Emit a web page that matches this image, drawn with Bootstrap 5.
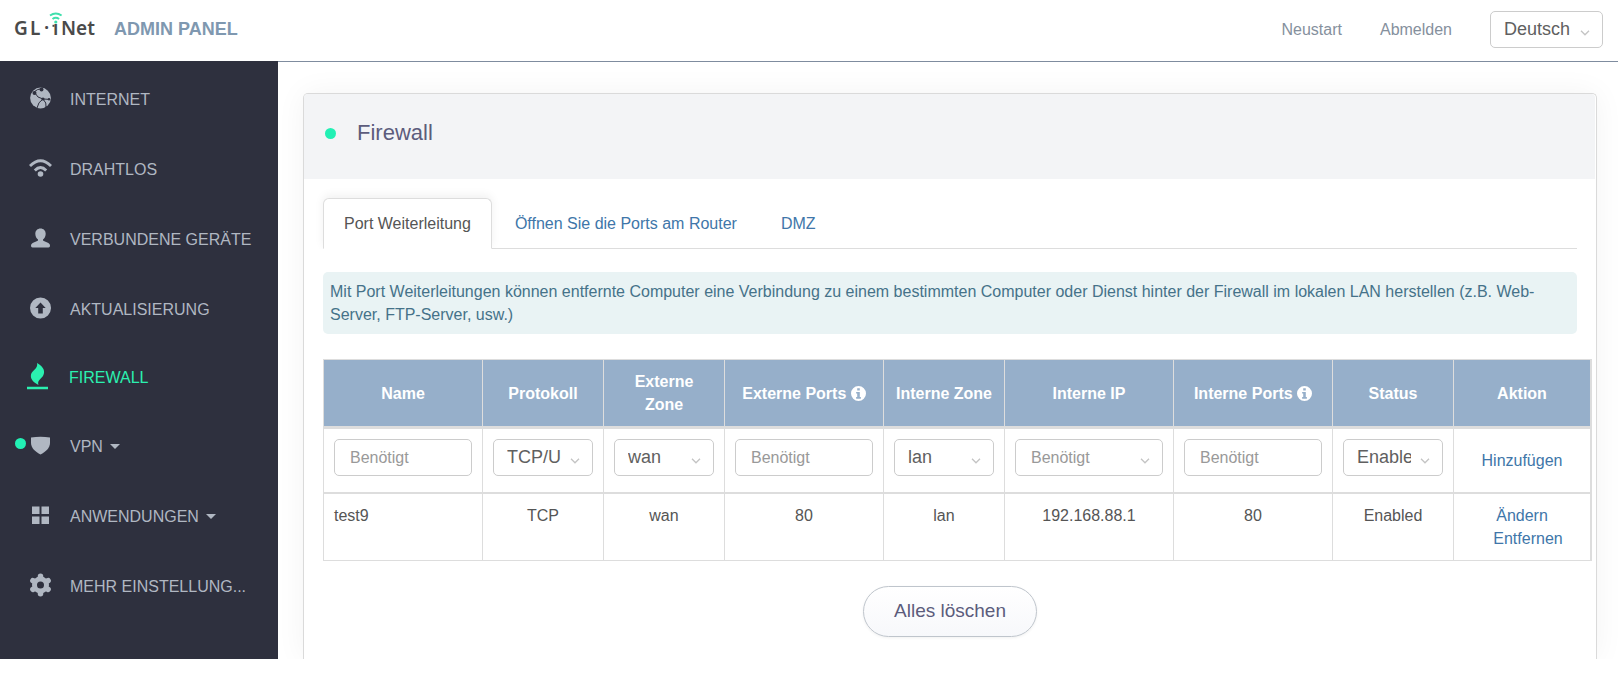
<!DOCTYPE html>
<html lang="de">
<head>
<meta charset="utf-8">
<meta name="viewport" content="width=device-width, initial-scale=1">
<title>GL·iNet Admin Panel – Firewall</title>
<link rel="stylesheet" href="https://cdn.jsdelivr.net/npm/bootstrap@5.3.0/dist/css/bootstrap.min.css">
<style>
  body { font: 16px/23px "Liberation Sans", Arial, sans-serif; color: #555; background: #fff; }
  a { text-decoration: none; color: #4076a9; }
  .topbar { min-height: 62px; border-bottom: 1px solid #7f8c9f; padding: 0 15px 2px 13px; gap: 17px; }
  .topbar a { color: #85909d; }
  .topbar nav { gap: 38px; }
  .panel-title { font-size: 18px; font-weight: 700; color: #7f98b0; }
  .shell { overflow: hidden; margin-top: -1px; }
  .sidebar { width: 278px; flex: none; background: #2e303e; padding: 3px 0 38px; }
  .sidebar a { height: 70px; color: #b0b7c2; padding-left: 30px; gap: 19px; position: relative; }
  .sidebar a.current { height: 67px; color: #2bf0b0; padding-left: 27px; gap: 21px; }
  .sidebar svg { width: 21px; height: 24px; flex: none; fill: currentColor; margin-bottom: 3px; }
  .sidebar .current svg { height: 27px; }
  .caret { border: 5px solid transparent; border-top-color: currentColor; border-bottom: 0; margin-left: 3px; display: inline-block; vertical-align: 3px; }
  .dot { width: 11px; height: 11px; border-radius: 50%; background: #22f0b4; flex: none; }
  .vpn-dot { position: absolute; left: 15px; top: 27px; }
  .content { padding: 32px 21px 0 25px; min-width: 0; }
  .panel { border: 1px solid #dadada; border-bottom: 0; border-radius: 5px 5px 0 0; box-shadow: 0 0 30px rgba(0,0,0,.05); background: #fff; }
  .panel-head { background: #f3f4f6; padding: 24px 21px 31px; gap: 21px; border-radius: 4px 4px 0 0; margin-right: 1px; }
  .panel-head h1 { font-size: 22px; line-height: 30px; color: #5c5c7c; font-weight: 400; }
  .panel-body { padding: 19px 19px 22px; }
  .nav-tabs { --bs-nav-tabs-border-color: #ddd; margin-bottom: 23px; gap: 2px; }
  .nav-tabs .nav-link { padding: 13px 20px; color: #4076a9; }
  .nav-tabs .nav-link.active { color: #555; border-color: #ddd #ddd #fff; box-shadow: 0 -3px 10px rgba(0,0,0,.06); clip-path: inset(-12px -12px 0 -12px); }
  .hint { background: #e9f3f4; color: #457289; padding: 8px 7px; border-radius: 5px; margin-bottom: 25px; }
  .rules-wrap { margin-right: -15px; margin-bottom: 25px; }
  .rules { width: 100%; table-layout: fixed; border-collapse: separate; border-spacing: 0; text-align: center; border: 1px solid #ddd; border-width: 1px 2px 0 0; }
  .rules th, .rules td { border: 0 solid #ddd; border-width: 0 0 1px 1px; padding: 10px; vertical-align: top; }
  .rules th { background: #96afca; color: #fff; vertical-align: middle; border-bottom-width: 3px; }
  .rules .entry td { padding-bottom: 16px; border-bottom-width: 2px; }
  .rules .entry td:last-child { padding-bottom: 10px; vertical-align: middle; }
  .w-s { width: 121px; } .w-m { width: 159px; } .w-l { width: 169px; }
  .rules th svg { width: 15px; height: 15px; fill: currentColor; vertical-align: -2px; }
  .field { display: block; height: 37px; width: 100%; border: 1px solid #ccc; border-radius: 5px; background: #fff; color: #606060; padding: 0 15px; line-height: 23px; }
  .field::placeholder { color: #999; opacity: 1; }
  .drop { appearance: none; background: #fff url("data:image/svg+xml,%3Csvg xmlns='http://www.w3.org/2000/svg' width='10' height='6'%3E%3Cpath d='M1 .8l4 4 4-4' fill='none' stroke='%23c4c4c4' stroke-width='1.3'/%3E%3C/svg%3E") no-repeat right 12px top 18px; }
  select.field { font-size: 18px; padding: 0 31px 0 13px; }
  .lang { width: 113px; }
  .wipe { font-size: 19px; line-height: 23px; color: #5c5c7c; border: 1px solid #bfc5cc; border-radius: 26px; padding: 12px 30px 14px; background: linear-gradient(#fff, #f7f8fb); box-shadow: 0 1px 3px rgba(0,0,0,.06); }
</style>
</head>
<body>
<header class="topbar d-flex align-items-center">
  <svg width="84" height="44" viewBox="0 0 84 44" overflow="visible" role="img" aria-label="GL·iNet">
    <g font-family="Noto Sans, sans-serif" font-size="19" font-weight="600" fill="#4a4a4a">
      <text x="1" y="27">G</text><text x="17" y="27">L</text><text x="31" y="27">·</text><text x="40" y="27">i</text><text x="48" y="27">Net</text>
    </g>
    <path d="M39 10h8v6h-8z" fill="#fff"/>
    <path d="M39.500 16.800h2v2h-2z" fill="#4a4a4a"/>
    <circle cx="42.800" cy="14" r="1.600" fill="#3fe0ac"/>
    <path d="M39.500 11q3.300-2.500 6.600 0M37 7.500q5.800-4 11.600 0" fill="none" stroke="#3fe0ac" stroke-width="2"/>
  </svg>
  <span class="panel-title">ADMIN PANEL</span>
  <nav class="ms-auto d-flex align-items-center">
    <a href="#">Neustart</a>
    <a href="#">Abmelden</a>
    <select class="field drop lang" aria-label="Sprache"><option>Deutsch</option><option>English</option></select>
  </nav>
</header>

<div class="shell d-flex">
  <nav class="sidebar d-flex flex-column">
    <a href="#" class="d-flex align-items-center">
      <svg viewBox="0 0 21 24"><circle cx="10.500" cy="12" r="10.400"/><path d="M4 6q3-3 8-3.500M5 7q2 5 8 6M13 13l7 .4M13 13q-5 3-6 9M13 13q4 4 3 8" fill="none" stroke="#2e303e" stroke-width="1"/><g fill="#2e303e"><circle cx="4.500" cy="7" r="2"/><circle cx="11.500" cy="3.500" r="2"/><circle cx="13" cy="13" r="1.600"/><circle cx="19" cy="13.200" r="1.200"/></g></svg>INTERNET</a>
    <a href="#" class="d-flex align-items-center">
      <svg viewBox="0 0 21 24" overflow="visible"><path d="M0 10Q10.500-.5 21 10M4.800 14.500Q10.500 8.500 16.200 14.500" fill="none" stroke="currentColor" stroke-width="2.800"/><circle cx="10.500" cy="18" r="2.800"/></svg>DRAHTLOS</a>
    <a href="#" class="d-flex align-items-center">
      <svg viewBox="0 0 21 24"><path d="M10.500 2.500c3 0 5.200 2.100 5.200 5.300 0 2.400-1.200 4.700-2.700 5.800v1c2 1.500 7 2 7 5 0 1.200-.5 1.900-1.500 1.900h-16C1.500 21.500 1 20.800 1 19.600c0-3 5-3.500 7-5v-1C6.500 12.500 5.300 10.200 5.300 7.800c0-3.200 2.200-5.300 5.200-5.300z"/></svg>VERBUNDENE GERÄTE</a>
    <a href="#" class="d-flex align-items-center">
      <svg viewBox="0 0 21 24"><path fill-rule="evenodd" d="M10.500 1.500a10.500 10.500 0 110 21 10.500 10.500 0 010-21zM10.500 6.500l-5.200 5.500h2.900v5.500h4.600v-5.500h2.900z"/></svg>AKTUALISIERUNG</a>
    <a href="#" class="current d-flex align-items-center" aria-current="page">
      <svg viewBox="0 0 21 27"><path d="M0 23.800h21v2.400H0zM10 0c7 4 8.500 8.500 6 13-2 3-6 4.500-4.500 9C7 19.500 3 16.500 4 11.500c1-4 7.500-6 6-11.500z"/></svg>FIREWALL</a>
    <a href="#" class="d-flex align-items-center">
      <span class="dot vpn-dot"></span>
      <svg viewBox="0 0 21 24"><path d="M1 4.500Q10.500 2.800 20 4.500v5.500c0 5-4.500 9-9.500 11.500C5.500 19 1 15 1 10z"/></svg><span>VPN <i class="caret"></i></span></a>
    <a href="#" class="d-flex align-items-center">
      <svg viewBox="0 0 21 24"><path d="M2 3.500h7.500V11H2zM11.500 3.500H19V11h-7.500zM2 13.500h7.500V21H2zM11.500 13.500H19V21h-7.500z"/></svg><span>ANWENDUNGEN <i class="caret"></i></span></a>
    <a href="#" class="d-flex align-items-center">
      <svg viewBox="0 0 21 24" overflow="visible"><circle cx="10.500" cy="12" r="6" fill="none" stroke="currentColor" stroke-width="5"/><path d="M10.500 3.200v1M10.500 19.800v1M2.900 7.600l1 .6M17.100 15.800l1 .6M18.100 7.600l-1 .6M3.900 15.800l-1 .6" stroke="currentColor" stroke-width="5.500" stroke-linecap="round"/></svg><span>MEHR EINSTELLUNG...</span></a>
  </nav>

  <main class="content flex-grow-1">
    <section class="panel">
      <div class="panel-head d-flex align-items-center"><span class="dot"></span><h1 class="m-0">Firewall</h1></div>
      <div class="panel-body">
        <ul class="nav nav-tabs">
          <li class="nav-item"><a class="nav-link active" href="#">Port Weiterleitung</a></li>
          <li class="nav-item"><a class="nav-link" href="#">Öffnen Sie die Ports am Router</a></li>
          <li class="nav-item"><a class="nav-link" href="#">DMZ</a></li>
        </ul>
        <div class="hint">Mit Port Weiterleitungen können entfernte Computer eine Verbindung zu einem bestimmten Computer oder Dienst hinter der Firewall im lokalen LAN herstellen (z.B. Web-Server, FTP-Server, usw.)</div>
        <div class="rules-wrap">
          <table class="rules">
            <thead>
              <tr>
                <th class="w-m">Name</th><th class="w-s">Protokoll</th><th class="w-s">Externe Zone</th>
                <th class="w-m">Externe Ports <svg viewBox="0 0 14 14"><path fill-rule="evenodd" d="M7 0a7 7 0 110 14A7 7 0 017 0zM5.800 2.200v2h2.400v-2zM4.800 5.500V7h1v3.300h-1v1.500h4.400v-1.500h-1V5.500z"/></svg></th>
                <th class="w-s text-nowrap">Interne Zone</th><th class="w-l">Interne IP</th>
                <th class="w-m">Interne Ports <svg viewBox="0 0 14 14"><path fill-rule="evenodd" d="M7 0a7 7 0 110 14A7 7 0 017 0zM5.800 2.200v2h2.400v-2zM4.800 5.500V7h1v3.300h-1v1.500h4.400v-1.500h-1V5.500z"/></svg></th>
                <th class="w-s">Status</th><th>Aktion</th>
              </tr>
            </thead>
            <tbody>
              <tr class="entry">
                <td><input class="field" type="text" placeholder="Benötigt" aria-label="Name"></td>
                <td><select class="field drop" aria-label="Protokoll"><option>TCP/UDP</option><option>TCP</option><option>UDP</option></select></td>
                <td><select class="field drop" aria-label="Externe Zone"><option>wan</option></select></td>
                <td><input class="field" type="text" placeholder="Benötigt" aria-label="Externe Ports"></td>
                <td><select class="field drop" aria-label="Interne Zone"><option>lan</option></select></td>
                <td><input class="field drop" type="text" placeholder="Benötigt" aria-label="Interne IP"></td>
                <td><input class="field" type="text" placeholder="Benötigt" aria-label="Interne Ports"></td>
                <td><select class="field drop" aria-label="Status"><option>Enabled</option><option>Disabled</option></select></td>
                <td><a href="#">Hinzufügen</a></td>
              </tr>
              <tr>
                <td class="text-start">test9</td><td>TCP</td><td>wan</td><td>80</td><td>lan</td><td>192.168.88.1</td><td>80</td><td>Enabled</td>
                <td><a href="#">Ändern</a><br><a href="#" class="ms-2 ps-1">Entfernen</a></td>
              </tr>
            </tbody>
          </table>
        </div>
        <div class="text-center"><button type="button" class="wipe">Alles löschen</button></div>
      </div>
    </section>
  </main>
</div>
<script src="https://cdn.jsdelivr.net/npm/bootstrap@5.3.0/dist/js/bootstrap.bundle.min.js"></script>
</body>
</html>
